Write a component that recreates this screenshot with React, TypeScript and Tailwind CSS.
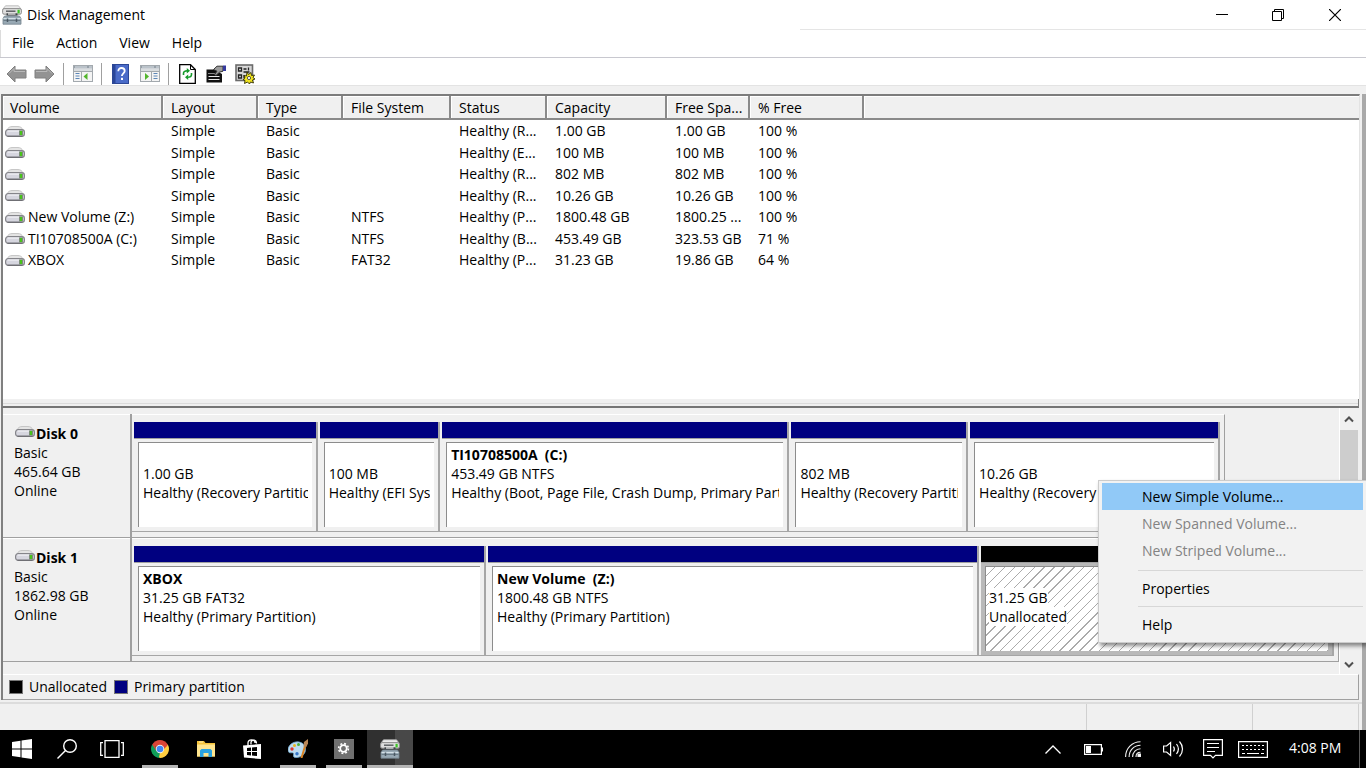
import { useState } from "react";
import type { ReactNode } from "react";
import clsx from "clsx";

type Volume = {
  name: string;
  fileSystem: string;
  status: string;
  capacity: string;
  free: string;
  percent: string;
};

type Partition = {
  name?: string;
  size: string;
  status: string;
  weight: number;
  unallocated?: boolean;
};

type Disk = {
  name: string;
  size: string;
  partitions: Partition[];
  rest: number;
};

const columns = [
  { label: "Volume", width: "w-[160px]" },
  { label: "Layout", width: "w-[95px]" },
  { label: "Type", width: "w-[85px]" },
  { label: "File System", width: "w-[108px]" },
  { label: "Status", width: "w-[96px]" },
  { label: "Capacity", width: "w-[120px]" },
  { label: "Free Spa...", width: "w-[83px]" },
  { label: "% Free", width: "w-[114px]" },
  { label: "", width: "w-auto" }
];

const volumes: Volume[] = [
  { name: "", fileSystem: "", status: "Healthy (R...", capacity: "1.00 GB", free: "1.00 GB", percent: "100 %" },
  { name: "", fileSystem: "", status: "Healthy (E...", capacity: "100 MB", free: "100 MB", percent: "100 %" },
  { name: "", fileSystem: "", status: "Healthy (R...", capacity: "802 MB", free: "802 MB", percent: "100 %" },
  { name: "", fileSystem: "", status: "Healthy (R...", capacity: "10.26 GB", free: "10.26 GB", percent: "100 %" },
  { name: "New Volume (Z:)", fileSystem: "NTFS", status: "Healthy (P...", capacity: "1800.48 GB", free: "1800.25 ...", percent: "100 %" },
  { name: "TI10708500A (C:)", fileSystem: "NTFS", status: "Healthy (B...", capacity: "453.49 GB", free: "323.53 GB", percent: "71 %" },
  { name: "XBOX", fileSystem: "FAT32", status: "Healthy (P...", capacity: "31.23 GB", free: "19.86 GB", percent: "64 %" }
];

const disks: Disk[] = [
  {
    name: "Disk 0",
    size: "465.64 GB",
    rest: 114,
    partitions: [
      { size: "1.00 GB", status: "Healthy (Recovery Partition)", weight: 181 },
      { size: "100 MB", status: "Healthy (EFI System Partition)", weight: 118 },
      { name: "TI10708500A  (C:)", size: "453.49 GB NTFS", status: "Healthy (Boot, Page File, Crash Dump, Primary Partition)", weight: 344 },
      { size: "802 MB", status: "Healthy (Recovery Partition)", weight: 174 },
      { size: "10.26 GB", status: "Healthy (Recovery Partition)", weight: 247 }
    ]
  },
  {
    name: "Disk 1",
    size: "1862.98 GB",
    rest: 0,
    partitions: [
      { name: "XBOX", size: "31.25 GB FAT32", status: "Healthy (Primary Partition)", weight: 350 },
      { name: "New Volume  (Z:)", size: "1800.48 GB NTFS", status: "Healthy (Primary Partition)", weight: 489 },
      { size: "31.25 GB", status: "Unallocated", weight: 351, unallocated: true }
    ]
  }
];

function DriveIcon() {
  return (
    <svg width="20" height="11" viewBox="0 0 20 11" className="shrink-0" aria-hidden="true">
      <path d="M2 4C3 1.500 5 .5 7 .5h6c2 0 4 1 5 3.500z" fill="#e4e4e4" stroke="#bdbdbd" strokeWidth=".8" />
      <rect x=".6" y="3.600" width="18.800" height="6.800" rx="2.600" fill="#d6d6df" stroke="#85858a" strokeWidth="1.200" />
      <path d="M2.500 5h12" stroke="#f7f7fb" />
      <path d="M2.500 10.200h15" stroke="#66666b" />
      <rect x="14" y="4.500" width="4" height="5" fill="#7d8f78" />
      <rect x="15" y="5" width="2" height="4" fill="#48c41a" />
    </svg>
  );
}

function DiskMgmtIcon() {
  return (
    <svg width="20" height="20" viewBox="0 0 20 20" aria-hidden="true">
      <path d="M3.500.8h13L19 4H1z" fill="#ececec" stroke="#b0b0b0" strokeWidth=".8" />
      <rect x=".6" y="3.600" width="18.800" height="5.600" rx="1.500" fill="#dedede" stroke="#8e8e8e" />
      <path d="M4 6.200h9.500" stroke="#55595c" strokeWidth="1.400" />
      <path d="M4.500 8.300h11v2.400h-11z" fill="#3f4448" />
      <path d="M6 9h7.500" stroke="#f4f4f4" strokeWidth="1.200" />
      <rect x="15.500" y="4.800" width="2.200" height="3.600" fill="#3cc625" />
      <path d="M2.500 11h15L19 13.500v5.700H1v-5.700z" fill="#98a9b4" stroke="#75848e" strokeWidth=".8" />
      <path d="M1.500 13.500h17" stroke="#d4e0e7" />
      <path d="M1.500 15.500h17" stroke="#6c7c87" />
      <path d="M5.500 13.500v3.500M14.500 13.500v3.500" stroke="#4b5963" strokeWidth="1.500" />
    </svg>
  );
}

function ArrowIcon({ back = false }: { back?: boolean }) {
  return (
    <svg width="21" height="18" viewBox="0 0 21 18" aria-hidden="true">
      <path
        d={back ? "M1 9l8-8v4h11v8H9v4z" : "M20 9l-8-8v4H1v8h11v4z"}
        fill="#939393"
        stroke="#808080"
        strokeLinejoin="round"
      />
      <path d={back ? "M3 8.500l5-5v3h11" : "M2 6.500h11v-3l5 5"} fill="none" stroke="#b9b9b9" />
    </svg>
  );
}

function PaneIcon({ right = false }: { right?: boolean }) {
  return (
    <svg width="20" height="17" viewBox="0 0 20 17" aria-hidden="true">
      <rect x=".5" y=".5" width="19" height="16" fill="#f4f4f4" stroke="#a3a9ae" />
      <path d="M1 1h18v2.500H1z" fill="#97a1aa" />
      <path d="M1 3.500h18v2.500H1z" fill="#d9dde0" />
      <path d="M2 2h12M16 2h3" stroke="#dfe5ea" />
      <path d="M1 6.500h18" stroke="#a3a9ae" />
      {right ? (
        <>
          <path d="M11.500 6v10" stroke="#a3a9ae" />
          <path d="M13.500 8.500h4M13.500 11h4M13.500 13.500h4" stroke="#5c87b8" />
          <path d="M5 8v7l4-3.500z" fill="#52b52c" />
        </>
      ) : (
        <>
          <path d="M8.500 6v10" stroke="#a3a9ae" />
          <path d="M2.500 8.500h4M2.500 11h4M2.500 13.500h4" stroke="#5c87b8" />
          <path d="M14.500 8v7l-4-3.500z" fill="#52b52c" />
        </>
      )}
    </svg>
  );
}

function HelpIcon() {
  return (
    <svg width="17" height="20" viewBox="0 0 17 20" aria-hidden="true">
      <rect x=".5" y=".5" width="16" height="19" fill="#4a6bc8" stroke="#2c4796" />
      <path d="M1 1h2.500v18H1z" fill="#2a4699" />
      <path d="M6.300 7.300c0-2 1.300-3.300 3.200-3.300s3.200 1.200 3.200 2.900c0 2.300-2.800 2.600-2.800 5.100" fill="none" stroke="#fff" strokeWidth="1.800" />
      <rect x="9" y="13.800" width="2" height="2.200" fill="#fff" />
    </svg>
  );
}

function RefreshIcon() {
  return (
    <svg width="17" height="20" viewBox="0 0 17 20" aria-hidden="true">
      <path d="M.7.7h10.800L16.300 5.500v13.800H.7z" fill="#fff" stroke="#000" strokeWidth="1.300" />
      <path d="M11.500 1v4.500H16" fill="none" stroke="#000" />
      <path d="M4.500 11V9.500c0-2 1.500-2.700 4-2.700M12.500 9v1.500c0 2-1.500 2.800-4 2.800" fill="none" stroke="#159a2a" strokeWidth="1.600" />
      <path d="M7.800 4v5.600l3.200-2.800zM9.200 10.500v5.600L6 13.300z" fill="#159a2a" />
    </svg>
  );
}

function PropertiesIcon() {
  return (
    <svg width="20" height="18" viewBox="0 0 20 18" aria-hidden="true">
      <path d="M.5 4.500h8L16 9v8.500H.5z" fill="#111" />
      <path d="M2 8.500h7" stroke="#8a8a8a" />
      <path d="M2.500 11.500h11M2.500 14.500h11" stroke="#e8e8e8" />
      <path d="M7.500 4.500L11 1.200h6v5l-3.500 1-3.500 3.300-1.500-1L11 6.200z" fill="#9d9d9d" stroke="#333" />
      <path d="M17 .5h3V6h-3z" fill="#353a9e" />
    </svg>
  );
}

function SettingsIcon() {
  return (
    <svg width="20" height="20" viewBox="0 0 20 20" aria-hidden="true">
      <rect x="1" y="1" width="16.500" height="15.500" fill="#d6d6d6" stroke="#6b6b6b" strokeWidth="1.600" />
      <path d="M3.500 4h3v3h-3zM3.500 11h3v3h-3zM8.500 5h3M13.500 3.500v3M8.500 8h6M9 11v3" fill="none" stroke="#222" strokeWidth="1.300" />
      <path d="M12 8l1.500 2.500L16 8.500l.5 3 3-.5-1.500 2.500 2 1.500-2.500 1 1 3-3-1-1 2-2-2-3 1.500.5-3-2-1 2-1.500-1-2.500 2.500.5z" fill="#f3e620" stroke="#302d00" strokeWidth=".9" />
      <circle cx="14" cy="14" r="1.600" fill="#fff" stroke="#333" strokeWidth=".8" />
    </svg>
  );
}

function ToolButton({ label, children }: { label: string; children: ReactNode }) {
  return (
    <button aria-label={label} className="flex h-6 w-7 items-center justify-center hover:bg-sky-100">
      {children}
    </button>
  );
}

function TitleBar() {
  return (
    <header className="flex h-[29px] shrink-0 items-center pl-0.5">
      <DiskMgmtIcon />
      <h1 className="ml-[5px] text-[14px]">Disk Management</h1>
      <div className="ml-auto flex self-stretch">
        <button aria-label="Minimize" className="flex w-14 items-center justify-center">
          <svg width="12" height="12" viewBox="0 0 12 12">
            <path d="M0 5.500h12" stroke="#000" />
          </svg>
        </button>
        <button aria-label="Restore" className="flex w-14 items-center justify-center">
          <svg width="12" height="12" viewBox="0 0 12 12" fill="none" stroke="#000">
            <path d="M.5 2.500h9v9h-9zM2.500 2.500v-2h9v9h-2" />
          </svg>
        </button>
        <button aria-label="Close" className="mr-0.5 flex w-[58px] items-center justify-center">
          <svg width="12" height="12" viewBox="0 0 12 12">
            <path d="M0 0l12 12M12 0L0 12" stroke="#000" strokeWidth="1.200" />
          </svg>
        </button>
      </div>
    </header>
  );
}

function VolumeTable() {
  return (
    <div className="mr-0.5 ml-px min-h-0 flex-1 overflow-hidden border-t-2 border-r border-l-2 border-t-[#7c7c7c] border-r-[#e3e3e3] border-l-[#808080] bg-white">
      <table className="w-full table-fixed border-separate border-spacing-0 text-left">
        <thead>
          <tr className="bg-[#f0f0f0]">
            {columns.map((column) => (
              <th
                key={column.label}
                className={clsx(
                  "h-6 border-r-2 border-b-2 border-[#8a8a8a] p-0 pt-0.5 pl-2 font-normal whitespace-nowrap shadow-[inset_1px_1px_0_#fff] first:pl-[7px] last:border-r-0",
                  column.width
                )}
              >
                {column.label}
              </th>
            ))}
          </tr>
        </thead>
        <tbody>
          {volumes.map((volume, index) => (
            <tr key={index} className="whitespace-nowrap even:h-[21px] odd:h-[22px]">
              <td className="p-0">
                <div className="flex items-center gap-[3px] pl-0.5">
                  <DriveIcon />
                  {volume.name}
                </div>
              </td>
              <td className="p-0 pl-2">Simple</td>
              <td className="p-0 pl-2">Basic</td>
              <td className="p-0 pl-2">{volume.fileSystem}</td>
              <td className="p-0 pl-2">{volume.status}</td>
              <td className="p-0 pl-2">{volume.capacity}</td>
              <td className="p-0 pl-2">{volume.free}</td>
              <td className="p-0 pl-2">{volume.percent}</td>
              <td />
            </tr>
          ))}
        </tbody>
      </table>
    </div>
  );
}

function PartitionBlock({ partition }: { partition: Partition }) {
  const free = partition.unallocated;

  return (
    <div
      className="flex min-w-0 basis-0 flex-col border-r-2 border-b border-[#a6a6a6] pl-0.5"
      style={{ flexGrow: partition.weight }}
    >
      <div className={clsx("h-[17px] border-b border-[#a0a0a0]", free ? "bg-black" : "bg-[#000080]")} />
      <div className={clsx("flex min-h-0 flex-1 px-1 pt-[3px] pb-1", free && "bg-[#b9b9b9]")}>
        <div
          className={clsx(
            "min-w-0 flex-1 overflow-hidden border-t border-l border-[#8c8c8c] pt-0.5 pr-1 leading-[19px] whitespace-pre",
            free
              ? "bg-[repeating-linear-gradient(135deg,#fff_0px,#fff_6px,#ababab_6px,#ababab_7px)] pl-[3px]"
              : "bg-white pl-1"
          )}
        >
          <p className="h-[19px] font-bold">{partition.name}</p>
          <p>
            <span className={clsx(free && "bg-white")}>{partition.size}</span>
          </p>
          <p className="overflow-hidden">
            <span className={clsx(free && "bg-white")}>{partition.status}</span>
          </p>
        </div>
      </div>
    </div>
  );
}

function DiskRow({ disk }: { disk: Disk }) {
  return (
    <section className="flex h-[124px]">
      <div className="w-[129px] shrink-0 border-r-2 border-b border-[#a0a0a0] pt-2.5 pl-[11px] leading-[19px] shadow-[inset_0_1px_0_#fff]">
        <h2 className="flex gap-px font-bold">
          <span className="ml-px pt-0.5">
            <DriveIcon />
          </span>
          {disk.name}
        </h2>
        <p>Basic</p>
        <p>{disk.size}</p>
        <p>Online</p>
      </div>
      <div className="flex min-w-0 flex-1">
        <div
          className="flex min-w-0 basis-0 border-t border-r border-b border-t-white border-r-[#a0a0a0] border-b-[#a0a0a0] pt-[7px] pr-1 pb-[5px]"
          style={{ flexGrow: 1202 - disk.rest }}
        >
          {disk.partitions.map((partition, index) => (
            <PartitionBlock key={index} partition={partition} />
          ))}
        </div>
        <div className="basis-0" style={{ flexGrow: disk.rest }} />
      </div>
    </section>
  );
}

function ScrollBar() {
  return (
    <div className="flex w-5 shrink-0 flex-col border-l border-white pr-px">
      <button aria-label="Scroll up" className="flex h-[22px] items-center justify-center">
        <svg width="10" height="7" viewBox="0 0 10 7">
          <path d="M1 5.500l4-4 4 4" fill="none" stroke="#505050" strokeWidth="2" />
        </svg>
      </button>
      <div className="flex-1">
        <div className="h-3/4 bg-[#cdcdcd]" />
      </div>
      <button aria-label="Scroll down" className="flex h-5 items-center justify-center">
        <svg width="10" height="7" viewBox="0 0 10 7">
          <path d="M1 1.500l4 4 4-4" fill="none" stroke="#505050" strokeWidth="2" />
        </svg>
      </button>
    </div>
  );
}

function ContextMenu() {
  const item = "flex h-[27px] w-full items-center pl-10 text-left";

  return (
    <div
      role="menu"
      className="absolute top-[72px] right-0 w-[268px] border border-r-0 border-[#cccccc] bg-[#f2f2f2] pt-0.5 pr-[3px] pb-1 pl-[3px] shadow-[2px_3px_4px_rgba(0,0,0,0.45)]"
    >
      <button role="menuitem" className={clsx(item, "bg-[#91c9f7]")}>New Simple Volume...</button>
      <button role="menuitem" disabled className={clsx(item, "text-[#838383]")}>New Spanned Volume...</button>
      <button role="menuitem" disabled className={clsx(item, "text-[#838383]")}>New Striped Volume...</button>
      <hr className="mt-1.5 mb-1 ml-9 border-[#d7d7d7]" />
      <button role="menuitem" className={item}>Properties</button>
      <hr className="my-1 ml-9 border-[#d7d7d7]" />
      <button role="menuitem" className={item}>Help</button>
    </div>
  );
}

function TaskButton({
  label,
  wide = false,
  open = false,
  active = false,
  children
}: {
  label: string;
  wide?: boolean;
  open?: boolean;
  active?: boolean;
  children: ReactNode;
}) {
  return (
    <button
      aria-label={label}
      className={clsx(
        "relative flex h-full shrink-0 items-center justify-center",
        wide ? "w-[46px]" : "w-[45px]",
        active && "bg-linear-to-r from-[#303030] from-60% to-[#484848] to-60%"
      )}
    >
      {children}
      {open && (
        <span className={clsx("absolute bottom-0 h-[3px] bg-[#b5b5b5]", active ? "inset-x-0" : "inset-x-[5px]")} />
      )}
    </button>
  );
}

function TaskBar() {
  const [activeApp, setActiveApp] = useState("Disk Management");

  return (
    <footer className="flex h-[38px] shrink-0 items-center bg-black text-white" onDoubleClick={() => setActiveApp("")}>
      <div className="-ml-px flex h-full">
        <TaskButton label="Start">
          <svg width="20" height="20" viewBox="0 0 20 20" fill="#fff">
            <path d="M0 3l8.500-1.200v7.700H0zM9.500 1.600L20 0v9.500H9.500zM0 10.500h8.500v7.700L0 17zM9.500 10.500H20V20L9.500 18.400z" />
          </svg>
        </TaskButton>
        <TaskButton label="Search">
          <svg width="20" height="20" viewBox="0 0 20 20" fill="none" stroke="#fff" strokeWidth="1.400">
            <circle cx="13" cy="7" r="6.300" />
            <path d="M8.500 11.500L.5 19.500" />
          </svg>
        </TaskButton>
        <TaskButton label="Task view">
          <svg width="24" height="18" viewBox="0 0 24 18" fill="none" stroke="#fff" strokeWidth="1.300">
            <path d="M5 .7h14v16.600H5zM3 2.700H.7v12.600H3M21 2.700h2.300v12.600H21" />
          </svg>
        </TaskButton>
      </div>
      <div className="w-[3px]" />
      <TaskButton label="Chrome" wide open>
        <svg width="18" height="18" viewBox="0 0 18 18">
          <path d="M9 9L1.210 4.500A9 9 0 0 1 16.790 4.500z" fill="#db4437" />
          <path d="M9 9L16.790 4.500A9 9 0 0 1 9 18z" fill="#ffcd40" />
          <path d="M9 9v9A9 9 0 0 1 1.210 4.500z" fill="#0f9d58" />
          <path d="M9 4.800h8L16.800 4.500 16 6l-4 4zM5.400 11L1.210 4.500 4 4z" fill="#db4437" />
          <path d="M12.700 11L9 18 8 17l1-4z" fill="#ffcd40" />
          <circle cx="9" cy="9" r="4.200" fill="#f1f1f1" />
          <circle cx="9" cy="9" r="3.300" fill="#4285f4" />
        </svg>
      </TaskButton>
      <TaskButton label="File Explorer" wide>
        <svg width="18" height="16" viewBox="0 0 18 16">
          <path d="M0 0h7l1.500 2H18v13.500H0z" fill="#f5c33b" />
          <path d="M0 3.500h18v12H0z" fill="#ffe58f" />
          <path d="M2 1h4" stroke="#fff2b8" />
          <path d="M3 16V9.500L4.500 8h9L15 9.500V16h-3.500v-4h-5v4z" fill="#2ba3e0" />
        </svg>
      </TaskButton>
      <TaskButton label="Store" wide>
        <svg width="18" height="20" viewBox="0 0 18 20">
          <path d="M5 7V4c0-4 7-4.500 7 0M8 5.500V3c1-3 5.500-2.500 5.500 1.500" fill="none" stroke="#fff" strokeWidth="1.300" />
          <path d="M0 6.500L18 5v15L1 18.500z" fill="#fff" />
          <path d="M4 9l4-.400v3.400H4zM9 8.500l5-.500v4H9zM4 13h4v3.400L4 16zM9 13h5v4l-5-.500z" fill="#000" />
        </svg>
      </TaskButton>
      <TaskButton label="Paint" wide open>
        <svg width="20" height="20" viewBox="0 0 20 20">
          <path d="M11 3C5 2 0 6.500 0 11c0 2.500 1.500 3 3.500 2.800 2-.2 2.500.7 2 2.200-.5 2 1 2.800 3.500 2.500 5-.500 9-4 8.500-9C17.200 6 14.500 3.500 11 3z" fill="#bddcf0" stroke="#6ba5cd" strokeWidth=".8" />
          <circle cx="4" cy="10" r="1.700" fill="#dc3730" />
          <circle cx="6.500" cy="6.500" r="1.500" fill="#e9b420" />
          <circle cx="10.500" cy="5.500" r="1.500" fill="#4eae3b" />
          <circle cx="9" cy="14.800" r="1.700" fill="#3576c8" />
          <path d="M12.500 19l3.500-12 2 .5-3.500 11.500z" fill="#d98324" />
          <path d="M15.500 7.500l.5-4.500 4-3v4.500L18.300 8z" fill="#b98657" />
        </svg>
      </TaskButton>
      <TaskButton label="Settings" wide open>
        <svg width="20" height="20" viewBox="0 0 20 20">
          <path d="M0 0h20v20H0z" fill="#707070" />
          <circle cx="9.500" cy="9.500" r="3.300" fill="none" stroke="#fff" strokeWidth="1.800" />
          <circle cx="9.500" cy="9.500" r="4.900" fill="none" stroke="#fff" strokeWidth="1.600" strokeDasharray="1.900 1.950" />
        </svg>
      </TaskButton>
      <TaskButton label="Disk Management" wide open active={activeApp === "Disk Management"}>
        <DiskMgmtIcon />
      </TaskButton>

      <div className="ml-auto flex h-full items-center">
        <button aria-label="Show hidden icons" className="flex w-10 justify-center">
          <svg width="16" height="9" viewBox="0 0 16 9" fill="none" stroke="#fff" strokeWidth="1.300">
            <path d="M.5 8.500L8 1l7.500 7.500" />
          </svg>
        </button>
        <button aria-label="Battery" className="flex w-10 justify-center">
          <svg width="19" height="11" viewBox="0 0 19 11">
            <path d="M.6.600h16.800v9.800H.6z" fill="none" stroke="#fff" strokeWidth="1.200" />
            <path d="M2 2h5v7H2zM18 3.500h1v4h-1z" fill="#fff" />
          </svg>
        </button>
        <button aria-label="Wi-Fi" className="flex w-10 justify-center">
          <svg width="16" height="16" viewBox="0 0 16 16" fill="none" stroke="#f0f0f0" strokeWidth="1.100">
            <path d="M.6 16C.6 7.500 7 .800 15.500.800M4.100 16C4.100 9.500 9 4.300 15.500 4.300M7.600 16c0-4.500 3.400-8.200 7.900-8.200M11 16c0-2.700 1.800-4.700 4.500-4.700" />
            <path d="M13 13h2.500v2.500H13z" fill="#fff" />
          </svg>
        </button>
        <button aria-label="Volume" className="flex w-10 justify-center">
          <svg width="21" height="18" viewBox="0 0 21 18" fill="none" stroke="#fff" strokeWidth="1.200">
            <path d="M.6 6h3l4-3.500v13l-4-3.500h-3zM10.500 6.500c1 1.500 1 3.500 0 5M13.500 4c2.300 3 2.300 7 0 10M16.500 1.500c4 4.500 4 10.500 0 15" />
          </svg>
        </button>
        <button aria-label="Notifications" className="flex w-10 justify-center">
          <svg width="20" height="20" viewBox="0 0 20 20" fill="none" stroke="#fff" strokeWidth="1.200">
            <path d="M.6.600h18.800v15.800H12.500L10 19l-2.500-2.600H.6zM4 4.500h12M4 8.500h12M4 12.500h8" />
          </svg>
        </button>
        <button aria-label="Touch keyboard" className="flex w-10 justify-center">
          <svg width="30" height="17" viewBox="0 0 30 17" fill="none" stroke="#fff" strokeWidth="1.200">
            <path d="M.6.600h28.800v15.800H.6z" />
            <path d="M4 4.500h22M4 8.500h22" strokeDasharray="2 2" />
            <path d="M4 12.500h3M9 12.500h12M23 12.500h3" />
          </svg>
        </button>
        <span className="ml-4 w-[54px] pb-0.5 text-[14px] whitespace-nowrap">4:08 PM</span>
        <div className="ml-4 h-full w-[7px] border-l border-[#5a5a5a]" />
      </div>
    </footer>
  );
}

export default function App() {
  return (
    <div className="flex h-screen min-h-[560px] flex-col overflow-hidden bg-white font-['Open_Sans','Noto_Sans',sans-serif] text-[14px] leading-5 text-black">
      <TitleBar />
      <div className="ml-[800px] border-t border-[#e5e5e5]" />

      <nav className="flex h-[27px] shrink-0 items-center gap-[22px] border-l border-[#dcdcdc] pb-0.5 pl-[11px]">
        <button>File</button>
        <button>Action</button>
        <button>View</button>
        <button>Help</button>
      </nav>

      <div className="flex h-7 shrink-0 items-center border-t border-[#c8c8cf] pt-1 pl-0.5">
        <ToolButton label="Back"><ArrowIcon back /></ToolButton>
        <ToolButton label="Forward"><ArrowIcon /></ToolButton>
        <div className="mx-[5px] h-[22px] w-px bg-[#a0a0a0]" />
        <ToolButton label="Show console tree"><PaneIcon /></ToolButton>
        <div className="mx-1 h-[22px] w-px bg-[#a0a0a0]" />
        <div className="flex gap-0.5">
          <ToolButton label="Help"><HelpIcon /></ToolButton>
          <ToolButton label="Show action pane"><PaneIcon right /></ToolButton>
        </div>
        <div className="mx-1 h-[22px] w-px bg-[#a0a0a0]" />
        <div className="flex gap-px">
          <ToolButton label="Refresh"><RefreshIcon /></ToolButton>
          <ToolButton label="Properties"><PropertiesIcon /></ToolButton>
          <ToolButton label="Settings"><SettingsIcon /></ToolButton>
        </div>
      </div>
      <div className="h-[9px] shrink-0 border-t border-[#e3e3e3] bg-[#f0f0f0]" />

      <main className="flex min-h-0 flex-1 flex-col border-r-4 border-[#a9a9a9] bg-[#f0f0f0]">
        <VolumeTable />
        <div className="mr-[3px] ml-px h-[9px] shrink-0 border-r border-b-2 border-l-2 border-r-[#808080] border-b-[#757575] border-l-[#808080] shadow-[inset_0_4px_0_#f0f0f0,inset_0_5px_0_#dcdcdc]" />

        <div className="relative -mr-1 shrink-0">
          <div className="mr-[7px] ml-px border-l-2 border-[#808080]">
            <div className="flex">
              <div className="min-w-0 flex-1 pt-1.5 pb-3">
                {disks.map((disk) => (
                  <DiskRow key={disk.name} disk={disk} />
                ))}
              </div>
              <ScrollBar />
            </div>
            <div className="flex h-[26px] items-center border-t border-r border-b border-t-white border-r-[#a0a0a0] border-b-[#a0a0a0] pl-1.5">
              <span className="mr-1.5 size-3.5 border border-[#777] bg-black" />
              Unallocated
              <span className="mr-1.5 ml-[7px] size-3.5 border border-[#777] bg-[#000080]" />
              Primary partition
            </div>
          </div>
          <ContextMenu />
        </div>

        <div className="mt-0.5 flex h-7 shrink-0 justify-end border-t-2 border-[#dcdcdc] pr-[3px]">
          <div className="w-[166px] border-l border-[#d0d0d0]" />
          <div className="w-[107px] border-x border-[#d0d0d0]" />
        </div>
      </main>

      <TaskBar />
    </div>
  );
}
